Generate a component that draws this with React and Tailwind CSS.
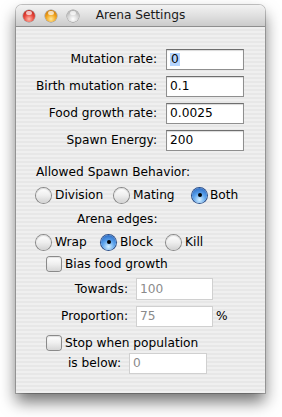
import React from 'react';

const font = { fontFamily: '"DejaVu Sans", "Liberation Sans", sans-serif' };

function Light({ kind }) {
  const fill =
    kind === 'red'
      ? 'bg-[radial-gradient(circle_at_50%_75%,#ffb8a8_0%,#e8473c_45%,#a3150f_100%)]'
      : kind === 'orange'
      ? 'bg-[radial-gradient(circle_at_50%_75%,#ffe89a_0%,#f2a51f_45%,#b05f00_100%)]'
      : 'bg-[radial-gradient(circle_at_50%_75%,#ffffff_0%,#d4d4d4_50%,#8f8f8f_100%)]';
  return (
    <div className={`relative w-[12px] h-[12px] rounded-full ${fill} shadow-[0_0_0_0.5px_rgba(0,0,0,0.35)]`}>
      <div className="absolute left-[3px] top-[1px] w-[6px] h-[4px] rounded-full bg-white/70" />
    </div>
  );
}

function Field({ value, width = 'w-[78px]', focused, disabled, height = 'h-[21px]' }) {
  return (
    <div
      className={`${width} ${height} bg-white border flex items-center pl-[3px] ${
        disabled ? 'border-[#d0d0d0] text-[#8a8a8a]' : 'border-[#8f8f8f] border-t-[#6e6e6e] text-black shadow-[inset_0_1px_1px_rgba(0,0,0,0.15)]'
      } ${focused ? 'shadow-[0_0_0_2px_#8cb2e4,0_0_2px_3px_#b9d2f0]' : ''}`}
    >
      {focused ? <span className="bg-[#b5d5ff] px-[1px]">{value}</span> : <span>{value}</span>}
    </div>
  );
}

function Radio({ on }) {
  return (
    <div
      className={`relative w-[15px] h-[15px] rounded-full shrink-0 ${
        on
          ? 'bg-[radial-gradient(circle_at_50%_78%,#d6f0ff_0%,#5aa2ec_45%,#1b56b4_100%)] shadow-[0_0_0_1px_#2b4f8a]'
          : 'bg-[linear-gradient(180deg,#ffffff_0%,#eeeeee_50%,#d2d2d2_100%)] shadow-[0_0_0_1px_#8a8a8a,inset_0_1px_1px_rgba(0,0,0,0.15)]'
      }`}
    >
      {on && <div className="absolute left-[5.5px] top-[5.5px] w-[4px] h-[4px] rounded-full bg-black" />}
    </div>
  );
}

function Check() {
  return (
    <div className="w-[14px] h-[14px] rounded-[3px] shrink-0 bg-[linear-gradient(180deg,#ffffff_0%,#efefef_50%,#d6d6d6_100%)] shadow-[0_0_0_1px_#8a8a8a,inset_0_1px_1px_rgba(0,0,0,0.12)]" />
  );
}

function FieldRow({ label, value, focused }) {
  return (
    <div className="flex items-center h-[21px]">
      <div className="w-[141px] text-right pr-0">{label}</div>
      <div className="ml-[9px]">
        <Field value={value} focused={focused} />
      </div>
    </div>
  );
}

export default function App() {
  return (
    <div className="w-[282px] h-[417px] bg-white overflow-hidden text-[12.2px] leading-none text-black" style={font}>
      <div className="ml-[16px] mt-[5px] w-[249px] rounded-t-[6px] shadow-[0_0_0_1px_rgba(0,0,0,0.22),0_9px_16px_rgba(0,0,0,0.55)]">
        {/* title bar */}
        <div className="relative h-[22px] rounded-t-[6px] bg-[linear-gradient(180deg,#f2f2f2_0%,#e0e0e0_50%,#cbcbcb_100%)] border-b border-[#8e8e8e] flex items-center">
          <div className="absolute left-[7px] top-[5px] flex gap-[10px]">
            <Light kind="red" />
            <Light kind="orange" />
            <Light kind="gray" />
          </div>
          <div className="w-full text-center text-[#1a1a1a]">Arena Settings</div>
        </div>

        {/* body */}
        <div className="h-[366px] pt-[22px] bg-[repeating-linear-gradient(180deg,#efefef_0px,#efefef_2px,#e7e7e7_2px,#e7e7e7_4px)]">
          <div className="flex flex-col gap-[6px]">
            <FieldRow label="Mutation rate:" value="0" focused />
            <FieldRow label="Birth mutation rate:" value="0.1" />
            <FieldRow label="Food growth rate:" value="0.0025" />
            <FieldRow label="Spawn Energy:" value="200" />
          </div>

          <div className="mt-[13px] h-[16px] flex items-center pl-[20px]">Allowed Spawn Behavior:</div>

          <div className="mt-[7px] h-[16px] pl-[20px] grid grid-cols-[78px_78px_auto] items-center">
            <div className="flex items-center gap-[4px]"><Radio /><span>Division</span></div>
            <div className="flex items-center gap-[4px]"><Radio /><span>Mating</span></div>
            <div className="flex items-center gap-[3px]"><Radio on /><span>Both</span></div>
          </div>

          <div className="mt-[8px] h-[16px] flex items-center pl-[61px]">Arena edges:</div>

          <div className="mt-[7px] h-[16px] pl-[20px] grid grid-cols-[65px_65px_auto] items-center">
            <div className="flex items-center gap-[4px]"><Radio /><span>Wrap</span></div>
            <div className="flex items-center gap-[4px]"><Radio on /><span>Block</span></div>
            <div className="flex items-center gap-[4px]"><Radio /><span>Kill</span></div>
          </div>

          <div className="mt-[6px] h-[16px] pl-[31px] flex items-center gap-[4px]">
            <Check />
            <span>Bias food growth</span>
          </div>

          <div className="mt-[6px] flex items-center">
            <div className="w-[112px] text-right">Towards:</div>
            <div className="ml-[8px]"><Field value="100" width="w-[77px]" height="h-[22px]" disabled /></div>
          </div>

          <div className="mt-[6px] flex items-center">
            <div className="w-[112px] text-right">Proportion:</div>
            <div className="ml-[8px]"><Field value="75" width="w-[77px]" disabled /></div>
            <span className="ml-[3px]">%</span>
          </div>

          <div className="mt-[8px] h-[16px] pl-[31px] flex items-center gap-[4px]">
            <Check />
            <span>Stop when population</span>
          </div>

          <div className="mt-[2px] flex items-center">
            <div className="w-[105px] text-right">is below:</div>
            <div className="ml-[8px]"><Field value="0" width="w-[78px]" disabled /></div>
          </div>
        </div>
      </div>
    </div>
  );
}
